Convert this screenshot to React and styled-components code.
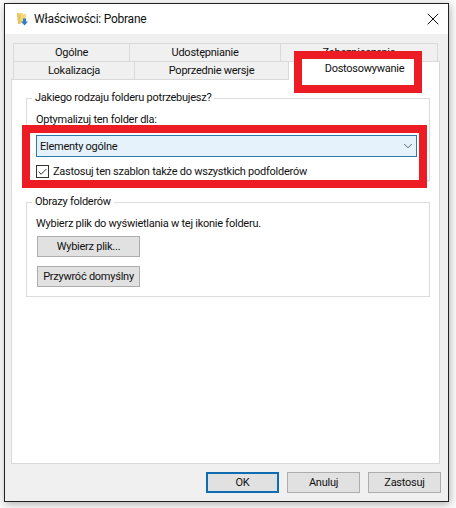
import React from 'react';
import styled, { createGlobalStyle } from 'styled-components';
import { Check, ChevronDown, X } from 'lucide-react';

const Global = createGlobalStyle`
  html, body { margin: 0; padding: 0; background: #fff; }
  body { width: 456px; height: 508px; overflow: hidden; font-family: Roboto, "Noto Sans", sans-serif; font-size: 11px; letter-spacing: -0.25px; color: #111; }
`;
const Page = styled.div`
  width: 456px; height: 508px; padding: 3px 7px 6px 4px; box-sizing: border-box; background: #fbfbfb;
`;
const Dialog = styled.div`
  position: relative; height: 100%; box-sizing: border-box; border: 1px solid #222;
  background: #f0f0f0; display: flex; flex-direction: column;
  box-shadow: 1px 2px 8px rgba(0,0,0,.3);
`;
const TitleBar = styled.div`
  height: 30px; flex: none; background: #fff; display: flex; align-items: center; padding: 0 5px 0 10px; gap: 3px;
`;
const Title = styled.span`flex: 1; font-size: 12px; white-space: nowrap;`;
const Body = styled.div`
  flex: 1; display: flex; flex-direction: column; padding: 9px 8px 0 6px; min-height: 0;
`;
const TabRow = styled.div`
  display: flex; height: 18px; box-sizing: border-box; padding-left: 2px; flex: none;
`;
const Tab = styled.div`
  width: ${p => p.$w}px; box-sizing: border-box; background: ${p => p.$active ? '#fff' : '#f0f0f0'};
  border: 1px solid #d9d9d9; border-bottom: none; border-left-width: ${p => p.$first ? 1 : 0}px;
  text-align: center; line-height: 18px; white-space: nowrap; overflow: hidden;
  ${p => p.$active && 'position: relative; z-index: 1; margin-bottom: -1px;'}
`;
const Panel = styled.div`
  flex: 1; min-height: 0; background: #fff; border: 1px solid #d9d9d9; padding: 10px 9px 0 14px; box-sizing: border-box;
  display: flex; flex-direction: column; gap: 13px;
`;
const Group = styled.fieldset`
  margin: 0; min-width: 0; padding: 0 0 0 9px; border: 1px solid #dcdcdc; height: ${p => p.$h}px; box-sizing: border-box; flex: none;
  display: flex; flex-direction: column;
`;
const Legend = styled.legend`padding: 0 3px; margin-left: -4px; line-height: 16px;`;
const Label = styled.div`line-height: 16px; white-space: nowrap; margin-top: 6px;`;
const Combo = styled.div`
  height: 22px; margin: 7px 12px 0 0; flex: none; box-sizing: border-box; border: 1px solid #2c7aa8; background: #e5f1fb;
  display: flex; align-items: center; justify-content: space-between; padding: 0 1px 0 3px;
`;
const CheckRow = styled.div`display: flex; align-items: center; gap: 4px; margin-top: 8px; line-height: 13px; white-space: nowrap;`;
const CheckBox = styled.div`
  width: 13px; height: 13px; box-sizing: border-box; border: 1px solid #333; background: #fff; display: flex; align-items: center; justify-content: center; flex: none;
`;
const PlainButton = styled.div`
  width: ${p => p.$w || 103}px; height: 21px; box-sizing: border-box; flex: none; background: #e1e1e1;
  border: ${p => p.$default ? '2px solid #0f6cb0' : '1px solid #adadad'};
  display: flex; align-items: center; justify-content: center; white-space: nowrap;
`;
const ButtonStack = styled.div`display: flex; flex-direction: column; gap: 9px; margin-top: 4px; padding-left: 1px;`;
const Footer = styled.div`
  height: 37px; flex: none; display: flex; justify-content: flex-end; align-items: flex-start; gap: 8px; padding-top: 8px; margin-right: -1px; box-sizing: border-box;
`;
const Highlight = styled.div`
  position: absolute; z-index: 2; box-sizing: border-box; border: 8px solid #ed1c24;
  left: ${p => p.$x}px; top: ${p => p.$y}px; width: ${p => p.$w}px; height: ${p => p.$h}px;
`;
const TabCover = styled(Highlight)`
  background: #fff; display: flex; justify-content: center; padding: 2px 0 0 13px; line-height: 16px; white-space: nowrap;
`;

const FolderIcon = () => (
  <svg width="16" height="16" viewBox="0 0 16 16">
    <path d="M2 2h5l1 1h3v9H3z" fill="#f5d77f" />
    <path d="M2 2l1 11h2.500V4z" fill="#e9c35f" />
    <path d="M8 7.500h3v3h2l-3.500 4-3.500-4h2z" fill="#2f7fc8" />
  </svg>
);

export default function App() {
  return (
    <Page>
      <Global />
      <Dialog>
        <TitleBar>
          <FolderIcon />
          <Title>Właściwości: Pobrane</Title>
          <X size={20} strokeWidth={1.2} color="#111" />
        </TitleBar>
        <Body>
          <TabRow>
            <Tab $w={117} $first>Ogólne</Tab>
            <Tab $w={151}>Udostępnianie</Tab>
            <Tab $w={157}>Zabezpieczenia</Tab>
          </TabRow>
          <TabRow>
            <Tab $w={122} $first>Lokalizacja</Tab>
            <Tab $w={154}>Poprzednie wersje</Tab>
            <Tab $w={151} $active />
          </TabRow>
          <Panel>
            <Group $h={91}>
              <Legend>Jakiego rodzaju folderu potrzebujesz?</Legend>
              <Label>Optymalizuj ten folder dla:</Label>
              <Combo>Elementy ogólne<ChevronDown size={14} strokeWidth={1.4} color="#444" /></Combo>
              <CheckRow>
                <CheckBox><Check size={12} strokeWidth={2} color="#222" /></CheckBox>
                Zastosuj ten szablon także do wszystkich podfolderów
              </CheckRow>
            </Group>
            <Group $h={103}>
              <Legend>Obrazy folderów</Legend>
              <Label>Wybierz plik do wyświetlania w tej ikonie folderu.</Label>
              <ButtonStack>
                <PlainButton>Wybierz plik...</PlainButton>
                <PlainButton>Przywróć domyślny</PlainButton>
              </ButtonStack>
            </Group>
          </Panel>
          <Footer>
            <PlainButton $w={73} $default>OK</PlainButton>
            <PlainButton $w={73}>Anuluj</PlainButton>
            <PlainButton $w={73}>Zastosuj</PlainButton>
          </Footer>
        </Body>
        <TabCover $x={289} $y={47} $w={128} $h={42}>Dostosowywanie</TabCover>
        <Highlight $x={17} $y={121} $w={405} $h={63} />
      </Dialog>
    </Page>
  );
}
